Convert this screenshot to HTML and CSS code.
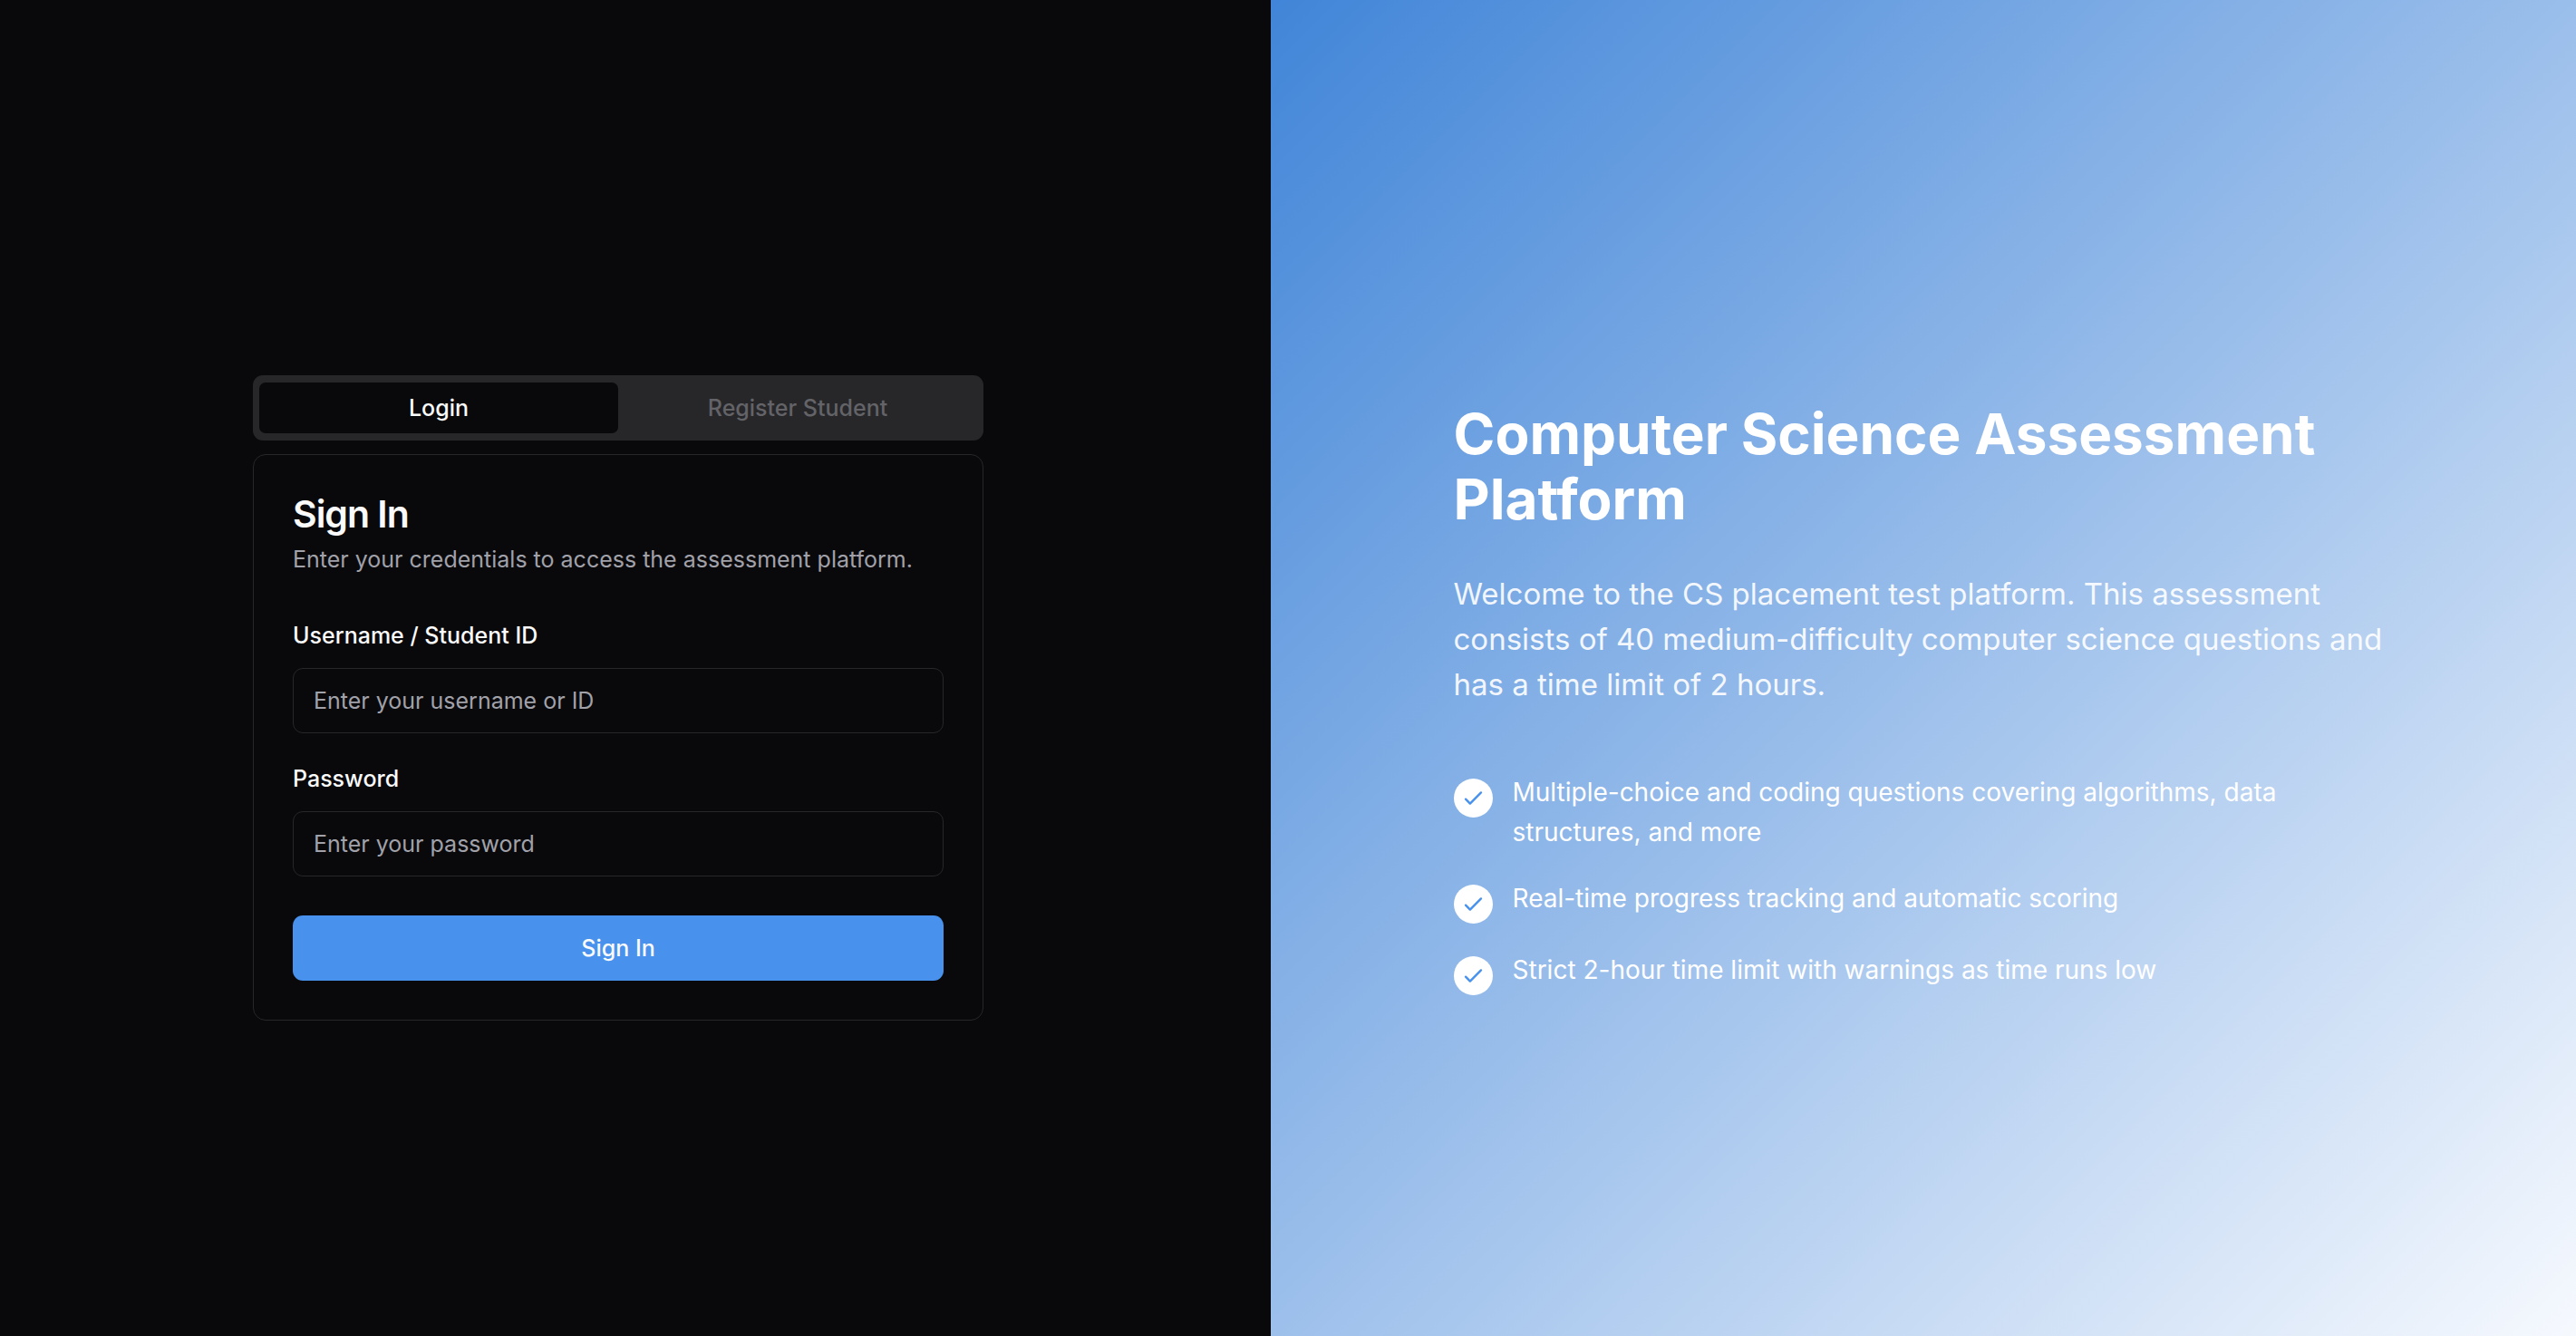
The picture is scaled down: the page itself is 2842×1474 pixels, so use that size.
FILE: index.html
```html
<!DOCTYPE html>
<html lang="en">
<head>
<meta charset="utf-8">
<meta name="viewport" content="width=device-width, initial-scale=1">
<title>Sign In</title>
<link rel="stylesheet" href="styles.css">
</head>
<body>
<div class="page">
  <main class="auth">
    <div class="auth-box">
      <div class="tabs" role="tablist">
        <button class="tab tab-active" type="button" role="tab" aria-selected="true">Login</button>
        <button class="tab" type="button" role="tab" aria-selected="false" disabled>Register Student</button>
      </div>
      <section class="card">
        <header class="card-header">
          <h2 class="card-title">Sign In</h2>
          <p class="card-text">Enter your credentials to access the assessment platform.</p>
        </header>
        <form class="form">
          <div class="fields">
            <div class="field">
              <label class="label" for="username">Username / Student ID</label>
              <input class="input" id="username" type="text" placeholder="Enter your username or ID">
            </div>
            <div class="field">
              <label class="label" for="password">Password</label>
              <input class="input" id="password" type="password" placeholder="Enter your password">
            </div>
          </div>
          <button class="submit" type="submit">Sign In</button>
        </form>
      </section>
    </div>
  </main>
  <aside class="hero">
    <div class="hero-box">
      <h1 class="hero-title">Computer Science Assessment Platform</h1>
      <p class="hero-text">Welcome to the CS placement test platform. This assessment consists of 40 medium-difficulty computer science questions and has a time limit of 2 hours.</p>
      <ul class="features">
        <li class="feature">
          <span class="check"><svg viewBox="0 0 24 24" aria-hidden="true"><path d="M5 13l4 4L19 7"/></svg></span>
          <span>Multiple-choice and coding questions covering algorithms, data structures, and more</span>
        </li>
        <li class="feature">
          <span class="check"><svg viewBox="0 0 24 24" aria-hidden="true"><path d="M5 13l4 4L19 7"/></svg></span>
          <span>Real-time progress tracking and automatic scoring</span>
        </li>
        <li class="feature">
          <span class="check"><svg viewBox="0 0 24 24" aria-hidden="true"><path d="M5 13l4 4L19 7"/></svg></span>
          <span>Strict 2-hour time limit with warnings as time runs low</span>
        </li>
      </ul>
    </div>
  </aside>
</div>
</body>
</html>
```
FILE: styles.css
```css
*, *::before, *::after { box-sizing: border-box; }
body, h1, h2, p, ul { margin: 0; padding: 0; }
body {
  background: #09090b;
  color: #fafafa;
  font-family: Inter, "Liberation Sans", sans-serif;
}
button, input { font: inherit; }

.page {
  display: grid;
  grid-template-columns: 37fr 38fr;
  min-height: 100vh;
}

/* Sign-in column */
.auth {
  display: flex;
  align-items: center;
  justify-content: center;
  padding: 66px 38px 0 0;
}
.auth-box {
  display: flex;
  flex-direction: column;
  gap: 15px;
  width: 100%;
  max-width: 806px;
}
.tabs {
  display: grid;
  grid-template-columns: 1fr 1fr;
  padding: 8px 7px;
  border-radius: 11px;
  background: #27272a;
}
.tab {
  height: 56px;
  padding: 0;
  border: 0;
  border-radius: 7px;
  background: transparent;
  color: #636368;
  font-size: 25px;
  font-weight: 500;
}
.tab-active {
  background: #09090b;
  color: #fafafa;
}
.card {
  display: flex;
  flex-direction: column;
  gap: 44px;
  padding: 43px;
  border: 1px solid #27272a;
  border-radius: 14px;
}
.card-header {
  display: flex;
  flex-direction: column;
  gap: 10px;
}
.card-title {
  font-size: 41px;
  line-height: 44px;
  font-weight: 600;
  letter-spacing: -0.025em;
}
.card-text {
  color: #a1a1aa;
  font-size: 25px;
  line-height: 36px;
}
.form {
  display: flex;
  flex-direction: column;
  gap: 43px;
}
.fields {
  display: flex;
  flex-direction: column;
  gap: 28px;
}
.field {
  display: flex;
  flex-direction: column;
  gap: 14px;
}
.label {
  font-size: 25px;
  line-height: 44px;
  font-weight: 500;
}
.input {
  width: 100%;
  height: 72px;
  padding: 0 22px;
  border: 1px solid #27272a;
  border-radius: 11px;
  background: #09090b;
  color: #fafafa;
  font-size: 25px;
}
.input::placeholder { color: #a1a1aa; opacity: 1; }
.submit {
  height: 72px;
  padding: 0;
  border: 0;
  border-radius: 11px;
  background: #4891ec;
  color: #f8fafc;
  font-size: 25px;
  font-weight: 500;
}

/* Introduction column */
.hero {
  display: flex;
  align-items: center;
  justify-content: center;
  padding-top: 67px;
  background: linear-gradient(135deg, #4185d8, #f6f9fe);
  color: #fff;
}
.hero-box {
  width: 100%;
  max-width: 1037px;
}
.hero-title {
  margin-bottom: 43px;
  font-size: 62px;
  line-height: 72px;
  font-weight: 700;
}
.hero-text {
  margin-bottom: 72px;
  font-size: 33px;
  line-height: 50px;
  opacity: 0.9;
}
.features {
  display: flex;
  flex-direction: column;
  gap: 29px;
  list-style: none;
}
.feature {
  display: flex;
  align-items: flex-start;
  gap: 22px;
  font-size: 28px;
  line-height: 44px;
}
.check {
  display: flex;
  flex: none;
  align-items: center;
  justify-content: center;
  width: 43px;
  height: 43px;
  margin-top: 7px;
  border-radius: 50%;
  background: #fff;
}
.check svg {
  width: 29px;
  height: 29px;
  fill: none;
  stroke: #4891ec;
  stroke-width: 2;
  stroke-linecap: round;
  stroke-linejoin: round;
}
```
